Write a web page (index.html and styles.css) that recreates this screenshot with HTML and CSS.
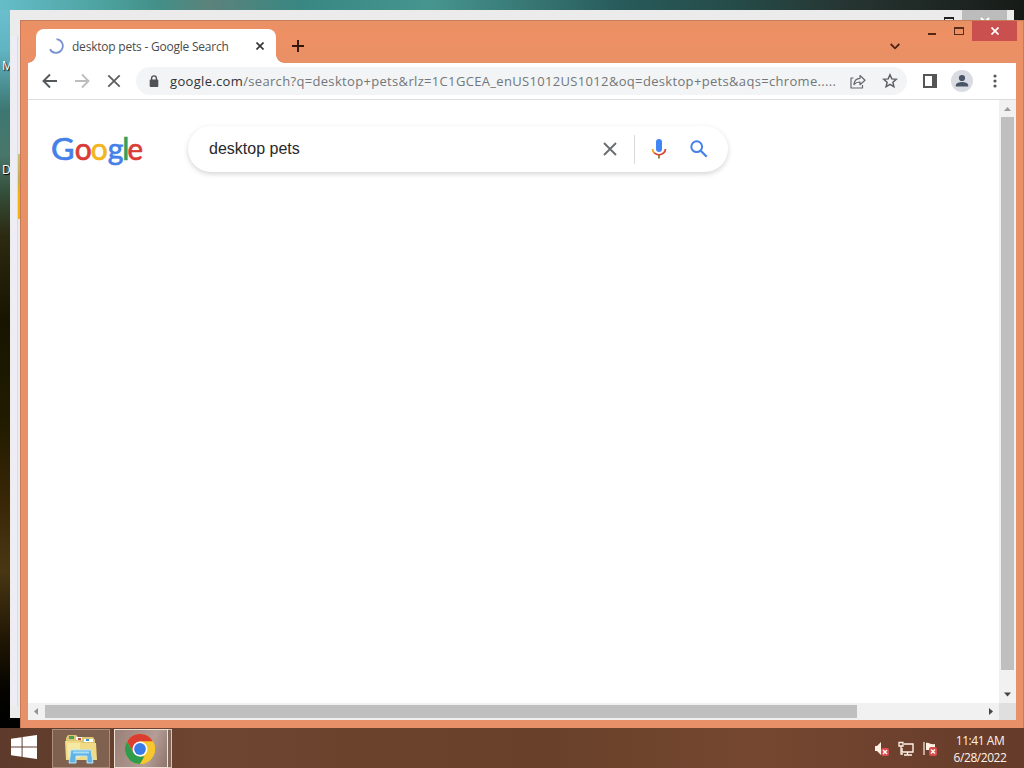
FILE: index.html
```html
<!DOCTYPE html>
<html lang="en">
<head>
<meta charset="utf-8">
<title>desktop pets - Google Search</title>
<link rel="stylesheet" href="styles.css">
</head>
<body>
<div class="desktop">
  <span class="desk-label label-m">M</span>
  <span class="desk-label label-d">D</span>

  <div class="back-window">
    <div class="back-pane"></div>
    <div class="back-accent"></div>
    <div class="back-max"></div>
    <div class="back-close"><svg width="10" height="10" viewBox="0 0 10 10"><path d="M1 1l8 8M9 1L1 9" stroke="#fff" stroke-width="2"/></svg></div>
  </div>

  <div class="window">
    <div class="controls">
      <span class="min"></span><span class="max"></span>
      <span class="close"><svg width="8" height="8" viewBox="0 0 8 8"><path d="M.5 .5l7 7M7.500 .5l-7 7" stroke="#fff" stroke-width="1.7"/></svg></span>
    </div>
    <header class="tabstrip">
      <div class="tab">
        <svg class="spinner" width="16" height="16" viewBox="0 0 16 16"><path d="M8.500 1.200a6.800 6.800 0 1 1-6.500 10" fill="none" stroke="#7891d0" stroke-width="1.800"/></svg>
        <span class="tab-title">desktop pets - Google Search</span>
        <svg class="tab-close" width="8" height="8" viewBox="0 0 8 8"><path d="M.5 .5l7 7M7.500 .5l-7 7" stroke="#333" stroke-width="1.600"/></svg>
      </div>
      <svg class="new-tab" width="12" height="12" viewBox="0 0 12 12"><path d="M6 0v12M0 6h12" stroke="#34160c" stroke-width="1.900"/></svg>
      <svg class="chevron" width="10" height="7" viewBox="0 0 10 7"><path d="M.7 1L5 5.300 9.300 1" fill="none" stroke="#4a2415" stroke-width="1.800"/></svg>
    </header>

    <nav class="toolbar">
      <svg width="16" height="16" viewBox="0 0 16 16"><path d="M15 8H2M8 1.500L1.500 8 8 14.500" fill="none" stroke="#55585b" stroke-width="1.900"/></svg>
      <svg class="forward" width="16" height="16" viewBox="0 0 16 16"><path d="M1 8h13M8 1.500L14.500 8 8 14.500" fill="none" stroke="#bbbdbf" stroke-width="1.800"/></svg>
      <svg class="stop" width="14" height="14" viewBox="0 0 14 14"><path d="M1.300 1.300l11.400 11.400M12.700 1.300L1.300 12.700" stroke="#5b5e61" stroke-width="1.800"/></svg>
      <div class="omnibox">
        <svg class="lock" width="10" height="13" viewBox="0 0 10 13"><rect x=".7" y="4.500" width="8.600" height="7.500" rx="1" fill="#4e5256"/><path d="M2.600 5V3.300a2.400 2.400 0 0 1 4.800 0V5" fill="none" stroke="#4e5256" stroke-width="1.400"/></svg>
        <span class="url"><b>google.com</b>/search?q=desktop+pets&amp;rlz=1C1GCEA_enUS1012US1012&amp;oq=desktop+pets&amp;aqs=chrome.....</span>
        <svg class="share" width="16" height="15" viewBox="0 0 16 15"><path d="M3.500 4H1v10h11.500v-3M4 10.500C4.300 6.500 6.500 4.500 10 4.300V1.500l5 4.700-5 4.500V8C7.300 7.900 5.500 8.700 4 10.500z" fill="none" stroke="#64686c" stroke-width="1.200" stroke-linejoin="round"/></svg>
        <svg class="star" width="16" height="16" viewBox="0 0 16 16"><path d="M8 1.800l1.800 4.100 4.500.4-3.400 3 1 4.400L8 11.400l-3.900 2.300 1-4.400-3.400-3 4.500-.4z" fill="none" stroke="#5c6064" stroke-width="1.500"/></svg>
      </div>
      <svg class="panel" width="14" height="14" viewBox="0 0 14 14"><path d="M1 1h12v12H1z" fill="none" stroke="#555" stroke-width="2"/><path d="M9 1h4v12H9z" fill="#555"/></svg>
      <svg class="avatar" width="22" height="22" viewBox="0 0 22 22"><circle cx="11" cy="11" r="11" fill="#d9dce2"/><circle cx="11" cy="8" r="3.100" fill="#4a5666"/><path d="M4.800 16.500v-1.200c0-2 3.700-3.200 6.200-3.200s6.200 1.200 6.200 3.200v1.200z" fill="#4a5666"/></svg>
      <svg class="menu" width="4" height="14" viewBox="0 0 4 14"><g fill="#55585b"><circle cx="2" cy="2" r="1.600"/><circle cx="2" cy="7" r="1.600"/><circle cx="2" cy="12" r="1.600"/></g></svg>
    </nav>

    <main class="viewport">
      <section class="page">
        <svg class="logo" width="94" height="38" viewBox="0 0 94 38"><g class="logo-text"><text x="0" y="27.500" fill="#4480e8" stroke="#4480e8" textLength="23.500" lengthAdjust="spacingAndGlyphs">G</text><text x="23.700" y="27.500" fill="#d93c35" stroke="#d93c35" textLength="17" lengthAdjust="spacingAndGlyphs">o</text><text x="39.800" y="27.500" fill="#f2b51d" stroke="#f2b51d" textLength="17" lengthAdjust="spacingAndGlyphs">o</text><text x="56.700" y="27.500" fill="#4480e8" stroke="#4480e8">g</text><text x="71.300" y="27.500" fill="#36a155" stroke="#36a155">l</text><text x="76.500" y="27.500" fill="#d93c35" stroke="#d93c35" textLength="15.500" lengthAdjust="spacingAndGlyphs">e</text></g></svg>
        <div class="search">
          <span class="query">desktop pets</span>
          <svg class="clear" width="14" height="14" viewBox="0 0 14 14"><path d="M1 1l12 12M13 1L1 13" stroke="#6a6d70" stroke-width="1.900"/></svg>
          <span class="divider"></span>
          <svg class="mic" width="16" height="22" viewBox="0 0 16 22"><rect x="5" y="1" width="6" height="13" rx="3" fill="#4285f4"/><path d="M1.500 11c.1 1.800.8 3.100 2 4.100" fill="none" stroke="#f2a51c" stroke-width="1.800"/><path d="M3.300 14.900c2.700 2.500 6.700 2.500 9.400 0 1.100-1 1.700-2.300 1.800-3.900" fill="none" stroke="#db4437" stroke-width="1.800"/><path d="M8 17v3.500" stroke="#8c782e" stroke-width="1.800"/></svg>
          <svg class="lens" width="18" height="18" viewBox="0 0 18 18"><circle cx="6.700" cy="6.700" r="5.400" fill="none" stroke="#4480e8" stroke-width="2"/><path d="M10.700 10.700l6 6" stroke="#4480e8" stroke-width="2.200"/></svg>
        </div>
      </section>
      <div class="vscroll">
        <svg width="17" height="17" viewBox="0 0 17 17"><path d="M5 11l3.500-4 3.500 4z" fill="#9b9b9b"/></svg>
        <span class="vthumb"></span>
        <svg width="17" height="17" viewBox="0 0 17 17"><path d="M5 6.500h7l-3.500 4z" fill="#454545"/></svg>
      </div>
      <div class="hscroll">
        <svg width="17" height="17" viewBox="0 0 17 17"><path d="M10 5L6 8.500l4 3.500z" fill="#929292"/></svg>
        <span class="hthumb"></span>
        <svg width="17" height="17" viewBox="0 0 17 17"><path d="M7 5l4 3.500L7 12z" fill="#454545"/></svg>
      </div>
      <div class="corner"></div>
    </main>
  </div>

  <footer class="taskbar">
    <svg class="start" width="26" height="25" viewBox="0 0 27 26"><path d="M0 4l11-1.600V12H0zM12 2.200L27 0v12H12zM0 13h11v9.600L0 21zM12 13h15v12l-15-2.200z" fill="#fff"/></svg>
    <div class="task explorer">
      <svg width="34" height="30" viewBox="0 0 34 30"><path d="M2 4l2-3h8l2 2h15l2 3v20H2z" fill="#dcc776"/><path d="M5 2h5v3H5z" fill="#4f9c55"/><path d="M12 3h6v3h-6z" fill="#fff"/><path d="M14 4h3v2h-3z" fill="#c44b36"/><path d="M20 5h9v3h-9z" fill="#fff"/><path d="M22 5h3v2h-3z" fill="#3f91c9"/><path d="M1 7h14l3 2h14l1 17H2z" fill="#f0da85"/><path d="M3 9h13v15H4z" fill="#f6e9a3"/><path d="M7 16h20l2 13h-6v-7H12v7H5z" fill="#62b3e4" stroke="#b9e7fa"/><path d="M9 17.500h16v2H9z" fill="#a8dcf8"/></svg>
    </div>
    <div class="task chrome">
      <svg width="30" height="30" viewBox="0 0 30 30"><circle cx="15" cy="15" r="15" fill="#f6c82e"/><path d="M2 7.500A15 15 0 0 1 28 7.500H15L8.500 18.750z" fill="#dc3d31"/><path d="M2 7.500l6.500 11.250L15 22.500h6.500L15 30A15 15 0 0 1 2 7.500z" fill="#2f9c4b"/><path d="M21.500 18.750L15 30a15 15 0 0 0 13-22.500H15z" fill="#f6c82e"/><circle cx="15" cy="15" r="7.500" fill="#fff"/><circle cx="15" cy="15" r="5.900" fill="#397ce5"/></svg>
    </div>
    <span class="stack"></span>
    <div class="tray">
      <svg width="16" height="16" viewBox="0 0 16 16"><path d="M1 5h2l4-4v13l-4-4H1z" fill="#fff2e5"/><rect x="7" y="7" width="8" height="8" rx="2" fill="#d84c4c"/><path d="M9 9l4 4M13 9l-4 4" stroke="#fff" stroke-width="1.400"/></svg>
      <svg width="16" height="16" viewBox="0 0 16 16"><path d="M6 3h9v8H4V7M9.500 11v3M6 14h8" fill="none" stroke="#fff2e5" stroke-width="1.400"/><path d="M1 1.500h4V5H1zM3 5v8h2" fill="none" stroke="#fff2e5" stroke-width="1.300"/></svg>
      <svg width="16" height="16" viewBox="0 0 16 16"><path d="M2 1v13" stroke="#fff2e5" stroke-width="1.200"/><path d="M4 2c3-1 4 2 9 1v6H4z" fill="#fff2e5"/><rect x="7" y="6" width="8" height="9" rx="2" fill="#d84c4c"/><path d="M9 8.500l4 4M13 8.500l-4 4" stroke="#fff" stroke-width="1.400"/></svg>
    </div>
    <div class="clock"><span>11:41 AM</span><span class="date">6/28/2022</span></div>
  </footer>
</div>
</body>
</html>
```
FILE: styles.css
```css
* { box-sizing: border-box; }
body { margin: 0; overflow: hidden; font-family: "Open Sans", "Noto Sans", sans-serif; }
svg { display: block; flex: none; }
.desktop {
  position: relative; width: 1024px; height: 768px; overflow: hidden;
  background:
    linear-gradient(90deg, #65bdc9 0, #4ba09c 110px, #438f87 160px, #5c827b 210px, #398782 300px, #47958f 430px, #285b5b 620px, #254b48 740px, #263431 850px, #171b18 1024px) 0 0 / 100% 10px no-repeat,
    linear-gradient(#171b18, #171b18) 100% 0 / 10px 20px no-repeat,
    linear-gradient(180deg, #6cc2cf 0, #61b4c2 50px, #3d7772 110px, #49766a 155px, #334c37 195px, #2d2a12 235px, #171400 320px, #211b00 420px, #392607 500px, #493714 570px, #211604 640px, #050400 690px, #000 728px);
}
.desk-label { position: absolute; left: 2px; color: #fff; font-size: 12px; line-height: 16px; text-shadow: 1px 1px 1px #000; }
.label-m { top: 58px; }
.label-d { top: 162px; }

.back-window { position: absolute; left: 10px; top: 10px; width: 1004px; height: 708px; background: #ebebeb; }
.back-pane { position: absolute; left: 1px; top: 26px; width: 7px; height: 670px; background: #eeecf5; border-right: 1px solid #d5dce4; }
.back-accent { position: absolute; left: 8px; top: 144px; width: 2px; height: 65px; background: linear-gradient(#c9c27a, #c6ad4d 40%, #f0b20c 60%); }
.back-max { position: absolute; left: 934px; top: 7px; width: 10px; height: 9px; border: 1px solid #222; border-top-width: 2px; }
.back-close { position: absolute; left: 952px; top: 0; width: 45px; height: 20px; padding: 7px 18px; background: #bcbcbc; }

.window { position: absolute; left: 20px; top: 20px; width: 1004px; height: 708px; padding: 0 7px 7px; border: 1px solid #c77b58; border-width: 1px 1px 0; background: linear-gradient(#e79165, #ee9064 12px, #e99066 40px, #e89067); }
.controls { position: absolute; right: 6px; top: 0; display: flex; height: 21px; }
.min { width: 8px; height: 2px; margin: 12px 18px 0 0; background: #542415; }
.max { width: 10px; height: 8px; margin: 6px 8px 0 0; border: 1px solid #5b2b19; border-top-width: 2px; }
.close { display: flex; align-items: center; justify-content: center; width: 45px; height: 20px; background: #c9504f; }

.tabstrip { display: flex; height: 42px; padding: 8px 0 0 8px; align-items: flex-start; }
.tab { position: relative; display: flex; align-items: center; width: 240px; height: 34px; padding: 0 12px; border-radius: 8px 8px 0 0; background: #fff; }
.tab::before, .tab::after { content: ""; position: absolute; bottom: 0; width: 8px; height: 8px; }
.tab::before { left: -8px; background: radial-gradient(circle at 0 0, transparent 7.500px, #fff 8px); }
.tab::after { right: -8px; background: radial-gradient(circle at 100% 0, transparent 7.500px, #fff 8px); }
.tab-title { width: 160px; margin-left: 8px; color: #4b4b4b; font-size: 12px; white-space: nowrap; letter-spacing: -.22px; }
.tab-close { margin-left: auto; }
.new-tab { margin: 11px 0 0 16px; }
.chevron { margin: 14px 0 0 586px; }

.toolbar { display: flex; align-items: center; height: 37px; padding-left: 14px; background: #fff; border-bottom: 1px solid #dadedf; }
.forward { margin-left: 16px; }
.stop { margin-left: 17px; }
.omnibox { display: flex; align-items: center; width: 771px; height: 28px; margin-left: 15px; padding: 0 9px 0 13px; border-radius: 14px; background: #f2f4f5; }
.url { width: 676px; margin-left: 11px; color: #73777a; font-size: 13px; line-height: 20px; letter-spacing: .33px; white-space: nowrap; }
.url b { color: #303235; font-weight: 400; }
.share { margin-left: 4px; }
.star { margin-left: auto; }
.panel { margin-left: 16px; }
.avatar { margin-left: 14px; }
.menu { margin-left: 20px; }

.viewport { display: grid; grid-template-columns: 1fr 17px; grid-template-rows: 1fr 17px; height: 620px; background: #fff; }
.page { display: flex; align-items: flex-start; padding: 26px 0 0 23px; }
.logo { margin-top: 6px; overflow: visible; }
.logo-text { font-family: Lato, sans-serif; font-size: 30px; stroke-width: .7px; }
.search { display: flex; align-items: center; width: 540px; height: 46px; margin-left: 43px; padding: 0 20px 0 21px; border-radius: 23px; background: #fff; box-shadow: 0 2px 5px rgba(60, 64, 67, .22); }
.query { color: #292929; font: 16px "Liberation Sans", Arial, sans-serif; }
.clear { margin-left: auto; }
.divider { width: 1px; height: 29px; margin-left: 17px; background: #d7d9da; }
.mic { margin-left: 16px; }
.lens { margin-left: 23px; }
.vscroll { display: flex; flex-direction: column; background: #f1f1f1; }
.vthumb { width: 13px; height: 553px; margin: 0 2px; background: #bfbfbf; }
.vscroll svg:last-child { margin-top: auto; }
.hscroll { display: flex; background: #f1f1f1; }
.hthumb { width: 812px; height: 13px; margin-top: 2px; background: #bfbfbf; }
.hscroll svg:last-child { margin-left: auto; }
.corner { background: #dfdfdf; }

.taskbar { position: absolute; left: 0; top: 728px; display: flex; align-items: flex-start; width: 1024px; height: 40px; background: linear-gradient(90deg, #5d3a2b, #6d4530 200px, #69412a 550px, #754731 760px, #653b29); }
.start { margin: 7px 1px 0 11px; }
.task { display: flex; align-items: center; justify-content: center; height: 39px; margin-top: 1px; border: 1px solid #aa8d7c; background: #80614f; }
.explorer { width: 58px; margin-left: 14px; }
.chrome { width: 54px; margin-left: 4px; padding-right: 2px; border-color: #efdfd7; background: linear-gradient(110deg, #9a8077, #b39d96 65%, #8e756a); }
.stack { width: 4px; height: 39px; margin-top: 1px; border: 1px solid #d7c4bb; border-left: 0; background: #81695e; }
.tray { display: flex; gap: 8px; margin: 13px 0 0 702px; }
.clock { display: flex; flex-direction: column; align-items: center; width: 64px; margin: 4px 0 0 10px; color: #fff3e9; font-size: 12px; line-height: 17px; letter-spacing: -.45px; white-space: nowrap; }
```
